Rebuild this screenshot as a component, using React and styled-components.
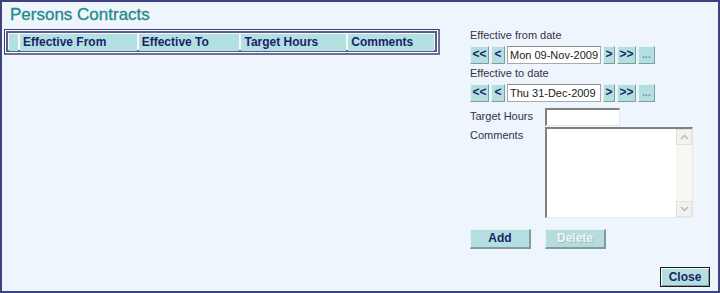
import React from "react";
import styled, { createGlobalStyle, css } from "styled-components";

const Global = createGlobalStyle`
  html, body { margin: 0; padding: 0; background: #eef5fd; }
  * { box-sizing: border-box; }
`;

const Frame = styled.div`
  width: 720px;
  height: 293px;
  border: 2px solid #3f4180;
  background: #eef5fd;
  display: flex;
  font-family: "Liberation Sans", Arial, sans-serif;
`;

const LeftCol = styled.div`
  width: 466px;
  padding: 3px 0 0 2px;
  display: flex;
  flex-direction: column;
`;

const Title = styled.div`
  font-size: 17px;
  color: #248a86;
  padding-left: 6px;
  height: 24px;
  line-height: 20px;
  -webkit-text-stroke: 0.3px #248a86;
`;

const Grid = styled.div`
  width: 436px;
  height: 26px;
  border: 1px solid #3b3d78;
  border-right: 2px solid #6e7099;
  border-bottom: 2px solid #6e7099;
  box-shadow: inset 0 0 0 1px #ffffff, inset 0 0 0 3px #5a5c8e;
  padding: 4px 4px 3px 4px;
  display: flex;
  gap: 2px;
  background: #f4f8fb;
`;

const HeadCell = styled.div`
  width: ${(p) => p.w}px;
  height: 17px;
  background: #b3e0e0;
  color: #1d1f6b;
  font-weight: bold;
  font-size: 12px;
  line-height: 17px;
  padding-left: ${(p) => p.pl ?? 3}px;
  white-space: nowrap;
`;

const RightCol = styled.div`
  flex: 1;
  padding: 26px 0 0 2px;
  display: flex;
  flex-direction: column;
  font-size: 11px;
  color: #33334a;
`;

const Label = styled.div`
  height: 15px;
  line-height: 15px;
  margin-top: ${(p) => p.mt ?? 0}px;
  white-space: nowrap;
`;

const DateRow = styled.div`
  display: flex;
  gap: 2px;
  height: 18px;
  margin-top: 3px;
`;

const bevel = css`
  background: #b4dfe0;
  border-top: 1px solid #e4f4f4;
  border-left: 1px solid #e4f4f4;
  border-right: 1px solid #7f9c9e;
  border-bottom: 1px solid #7f9c9e;
`;

const NavBtn = styled.div`
  ${bevel};
  width: ${(p) => p.w}px;
  height: 18px;
  color: ${(p) => (p.dim ? "#6f8fb0" : "#1d1f6b")};
  font-weight: bold;
  font-size: ${(p) => (p.dim ? 10 : 12)}px;
  line-height: 15px;
  text-align: center;
  white-space: nowrap;
`;

const DateInput = styled.div`
  width: 94px;
  height: 18px;
  background: #fff;
  border: 1px solid #a9a9a9;
  border-top-color: #8c8c8c;
  font-size: 11px;
  line-height: 16px;
  padding-left: 2px;
  color: #222;
  white-space: nowrap;
  overflow: hidden;
`;

const FieldRow = styled.div`
  display: flex;
  margin-top: ${(p) => p.mt ?? 0}px;
`;

const FieldLabel = styled.div`
  width: 75px;
  line-height: 15px;
  padding-top: ${(p) => p.pt ?? 1}px;
  white-space: nowrap;
`;

const TextBox = styled.div`
  width: ${(p) => p.w}px;
  height: ${(p) => p.h}px;
  background: #fff;
  border-top: 2px solid #808080;
  border-left: 2px solid #808080;
  border-right: 1px solid #e8e8e8;
  border-bottom: 1px solid #e8e8e8;
  display: flex;
  justify-content: flex-end;
`;

const ScrollBar = styled.div`
  width: 16px;
  display: flex;
  flex-direction: column;
  justify-content: space-between;
  background: #f7f7f4;
`;

const ScrollArrow = styled.div`
  height: 16px;
  display: flex;
  align-items: center;
  justify-content: center;
  background: #f2f2ee;
  border: 1px solid #e2e2dc;
`;

const ButtonRow = styled.div`
  display: flex;
  gap: 14px;
  margin-top: 11px;
`;

const ActionBtn = styled.div`
  ${bevel};
  border-right: 2px solid #7f9c9e;
  border-bottom: 2px solid #7f9c9e;
  width: ${(p) => p.w}px;
  height: 20px;
  color: ${(p) => (p.disabled ? "#eef6f6" : "#1d1f6b")};
  background: ${(p) => (p.disabled ? "#b8dcdd" : "#b4dfe0")};
  font-weight: bold;
  font-size: 12px;
  line-height: 17px;
  text-align: center;
  text-shadow: ${(p) => (p.disabled ? "1px 1px 0 #9bbcc0" : "none")};
`;

const CloseWrap = styled.div`
  display: flex;
  justify-content: flex-end;
  padding-right: 8px;
  margin-top: 18px;
`;

const CloseBtn = styled.div`
  width: 50px;
  height: 20px;
  background: #b4dfe0;
  border: 1px solid #1a1a2a;
  box-shadow: inset 1px 1px 0 #ffffff, inset -1px -1px 0 #7f9c9e;
  color: #1d1f6b;
  font-weight: bold;
  font-size: 12px;
  line-height: 18px;
  text-align: center;
`;

const Arrow = ({ up }) => (
  <svg width="9" height="6" viewBox="0 0 9 6">
    <path
      d={up ? "M1 5 L4.5 1.5 L8 5" : "M1 1 L4.5 4.5 L8 1"}
      stroke="#b0b8c0"
      strokeWidth="1.4"
      fill="none"
    />
  </svg>
);

const DatePicker = ({ value }) => (
  <DateRow>
    <NavBtn w={19}>&lt;&lt;</NavBtn>
    <NavBtn w={14}>&lt;</NavBtn>
    <DateInput>{value}</DateInput>
    <NavBtn w={12}>&gt;</NavBtn>
    <NavBtn w={19}>&gt;&gt;</NavBtn>
    <NavBtn w={17} dim>...</NavBtn>
  </DateRow>
);

export default function App() {
  return (
    <>
      <Global />
      <Frame>
        <LeftCol>
          <Title>Persons Contracts</Title>
          <Grid>
            <HeadCell w={9} pl={0} />
            <HeadCell w={117}>Effective From</HeadCell>
            <HeadCell w={101}>Effective To</HeadCell>
            <HeadCell w={105}>Target Hours</HeadCell>
            <HeadCell w={86}>Comments</HeadCell>
          </Grid>
        </LeftCol>
        <RightCol>
          <Label>Effective from date</Label>
          <DatePicker value="Mon 09-Nov-2009" />
          <Label mt={2}>Effective to date</Label>
          <DatePicker value="Thu 31-Dec-2009" />
          <FieldRow mt={6}>
            <FieldLabel>Target Hours</FieldLabel>
            <TextBox w={75} h={18} />
          </FieldRow>
          <FieldRow mt={1}>
            <FieldLabel pt={1}>Comments</FieldLabel>
            <TextBox w={148} h={91}>
              <ScrollBar>
                <ScrollArrow>
                  <Arrow up />
                </ScrollArrow>
                <ScrollArrow>
                  <Arrow />
                </ScrollArrow>
              </ScrollBar>
            </TextBox>
          </FieldRow>
          <ButtonRow>
            <ActionBtn w={61}>Add</ActionBtn>
            <ActionBtn w={61} disabled>Delete</ActionBtn>
          </ButtonRow>
          <CloseWrap>
            <CloseBtn>Close</CloseBtn>
          </CloseWrap>
        </RightCol>
      </Frame>
    </>
  );
}
